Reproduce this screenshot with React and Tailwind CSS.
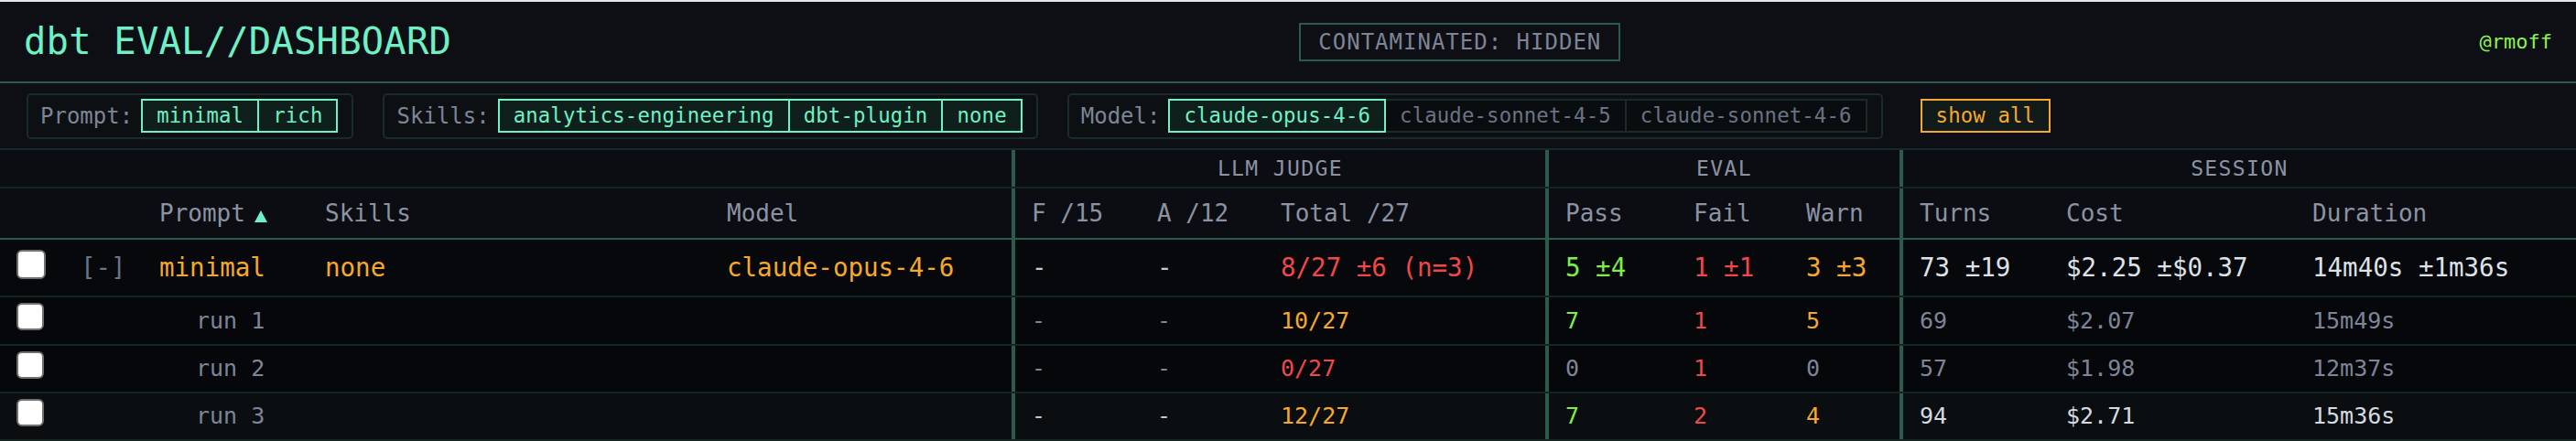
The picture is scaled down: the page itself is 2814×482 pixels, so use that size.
import React from 'react';

// column template shared by the header row and all data rows
const COLS =
  'grid grid-cols-[70px_86px_181px_439px_329px_141px_135px_307px_144px_123px_120px_164px_269px_306px]';
const cell = 'flex items-center pl-[18px] whitespace-nowrap';
const sepCell = 'flex items-center pl-[18px] whitespace-nowrap border-l-4 border-[#2b5b4d]';

const AMBER = 'text-[#f6a82e]';
const RED = 'text-[#f04848]';
const LIME = 'text-[#7cf04a]';
const DIM = 'text-[#7d8596]';
const LIGHT = 'text-[#d5d9e0]';

const runs = [
  { name: 'run 1', h: 'h-[53px]', bg: 'bg-[#05070a]', text: DIM, dash: 'text-[#7d8596]', total: '10/27', totalC: AMBER, pass: '7', passC: LIME, fail: '1', failC: RED, warn: '5', warnC: AMBER, turns: '69', cost: '$2.07', dur: '15m49s' },
  { name: 'run 2', h: 'h-[52px]', bg: 'bg-[#05070a]', text: DIM, dash: 'text-[#7d8596]', total: '0/27', totalC: RED, pass: '0', passC: DIM, fail: '1', failC: RED, warn: '0', warnC: DIM, turns: '57', cost: '$1.98', dur: '12m37s' },
  { name: 'run 3', h: 'h-[52px]', bg: 'bg-[#0a0e11]', text: LIGHT, dash: 'text-[#c4c8d0]', total: '12/27', totalC: AMBER, pass: '7', passC: LIME, fail: '2', failC: RED, warn: '4', warnC: AMBER, turns: '94', cost: '$2.71', dur: '15m36s' },
];

const FilterGroup = ({ label, children }) => (
  <div className="flex items-center h-[50px] pl-[13px] pr-[15px] gap-[9px] border-2 border-[#1b2b28] rounded-[5px] bg-[#0c1013]">
    <span className="text-[24px] text-[#7d8596]">{label}</span>
    <div className="flex">{children}</div>
  </div>
);

const Chip = ({ active, first, children }) => (
  <button
    className={
      (active
        ? 'relative z-10 border-[#6ff0c5] bg-[#0f1f1c] text-[#6ff0c5]'
        : 'border-[#1b2a27] bg-[#0a0d10] text-[#6b7383]') +
      ' h-[37px] px-[15px] flex items-center border-2 text-[22.3px] tracking-[0.15px] leading-none whitespace-nowrap' +
      (first ? '' : ' -ml-[2px]')
    }
  >
    {children}
  </button>
);

const Checkbox = ({ big }) => (
  <div
    className={
      big
        ? 'w-[32px] h-[32px] mb-[7px] rounded-[6px] border-2 border-[#707070] bg-white'
        : 'w-[30px] h-[30px] mb-[9px] rounded-[6px] border-2 border-[#707070] bg-white'
    }
  />
);

const App = () => {
  return (
    <div className="min-h-screen bg-[#05070a] font-['DejaVu_Sans_Mono',monospace]">
      <div className="h-[2px] bg-[#e6e6e6]" />

      <header className="h-[89px] flex items-center justify-between px-[26px] border-b-2 border-[#2b5b4d] bg-[#0d0f14]">
        <h1 className="text-[40.5px] tracking-[0.2px] leading-none text-[#6ff0c5]">dbt EVAL//DASHBOARD</h1>
        <div className="h-[42px] mr-[12px] px-[19px] flex items-center border-2 border-[#2b5b4d] text-[24px] tracking-[1px] text-[#7d8596]">
          CONTAMINATED: HIDDEN
        </div>
        <span className="text-[22px] text-[#8af24e]">@rmoff</span>
      </header>

      <div className="h-[73px] flex items-center px-[29px] gap-[32px] border-b-2 border-[#16292a] bg-[#0d0f14]">
        <FilterGroup label="Prompt:">
          <Chip active first>minimal</Chip>
          <Chip active>rich</Chip>
        </FilterGroup>
        <FilterGroup label="Skills:">
          <Chip active first>analytics-engineering</Chip>
          <Chip active>dbt-plugin</Chip>
          <Chip active>none</Chip>
        </FilterGroup>
        <FilterGroup label="Model:">
          <Chip active first>claude-opus-4-6</Chip>
          <Chip>claude-sonnet-4-5</Chip>
          <Chip>claude-sonnet-4-6</Chip>
        </FilterGroup>
        <button className="ml-[9px] h-[37px] px-[15px] flex items-center border-2 border-[#f6a82e] bg-[#111c1a] text-[#f6a82e] text-[22.3px] tracking-[0.15px] leading-none">
          show all
        </button>
      </div>

      {/* group header */}
      <div className="h-[42px] grid grid-cols-[1105px_583px_387px_739px] bg-[#0b0d13] border-b-2 border-[#152622] text-[23px] tracking-[1.4px] text-[#8b93a3]">
        <div />
        <div className="flex items-center justify-center border-l-4 border-[#2b5b4d]">LLM JUDGE</div>
        <div className="flex items-center justify-center border-l-4 border-[#2b5b4d]">EVAL</div>
        <div className="flex items-center justify-center border-l-4 border-[#2b5b4d]">SESSION</div>
      </div>

      {/* column header */}
      <div className={COLS + ' h-[56px] bg-[#0b0d13] border-b-2 border-[#2b5b4d] text-[26px] text-[#8b93a3]'}>
        <div className={cell} />
        <div className={cell} />
        <div className={cell}>
          Prompt
          <svg width="14" height="13" viewBox="0 0 14 13" className="ml-[10px] mt-[6px]">
            <polygon points="7,0 14,13 0,13" fill="#6ff0c5" />
          </svg>
        </div>
        <div className={cell}>Skills</div>
        <div className={cell}>Model</div>
        <div className={sepCell}>F /15</div>
        <div className={cell}>A /12</div>
        <div className={cell}>Total /27</div>
        <div className={sepCell}>Pass</div>
        <div className={cell}>Fail</div>
        <div className={cell}>Warn</div>
        <div className={sepCell}>Turns</div>
        <div className={cell}>Cost</div>
        <div className={cell}>Duration</div>
      </div>

      {/* aggregate row */}
      <div className={COLS + ' h-[63px] bg-[#06080b] border-b-2 border-[#152622] text-[27.5px] text-[#dde1e8]'}>
        <div className={cell}><Checkbox big /></div>
        <div className={cell + ' text-[#6b7383]'}>[-]</div>
        <div className={cell + ' ' + AMBER}>minimal</div>
        <div className={cell + ' ' + AMBER}>none</div>
        <div className={cell + ' ' + AMBER}>claude-opus-4-6</div>
        <div className={sepCell + ' text-[#c4c8d0]'}>-</div>
        <div className={cell + ' text-[#c4c8d0]'}>-</div>
        <div className={cell + ' ' + RED}>8/27 ±6 (n=3)</div>
        <div className={sepCell + ' ' + LIME}>5 ±4</div>
        <div className={cell + ' ' + RED}>1 ±1</div>
        <div className={cell + ' ' + AMBER}>3 ±3</div>
        <div className={sepCell}>73 ±19</div>
        <div className={cell}>$2.25 ±$0.37</div>
        <div className={cell}>14m40s ±1m36s</div>
      </div>

      {runs.map((r) => (
        <div key={r.name} className={COLS + ' ' + r.h + ' ' + r.bg + ' border-b-2 border-[#152622] text-[25px]'}>
          <div className={cell}><Checkbox /></div>
          <div className={cell} />
          <div className={cell + ' pl-[58px] text-[#7d8596]'}>{r.name}</div>
          <div className={cell} />
          <div className={cell} />
          <div className={sepCell + ' ' + r.dash}>-</div>
          <div className={cell + ' ' + r.dash}>-</div>
          <div className={cell + ' ' + r.totalC}>{r.total}</div>
          <div className={sepCell + ' ' + r.passC}>{r.pass}</div>
          <div className={cell + ' ' + r.failC}>{r.fail}</div>
          <div className={cell + ' ' + r.warnC}>{r.warn}</div>
          <div className={sepCell + ' ' + r.text}>{r.turns}</div>
          <div className={cell + ' ' + r.text}>{r.cost}</div>
          <div className={cell + ' ' + r.text}>{r.dur}</div>
        </div>
      ))}
    </div>
  );
};

export default App;
